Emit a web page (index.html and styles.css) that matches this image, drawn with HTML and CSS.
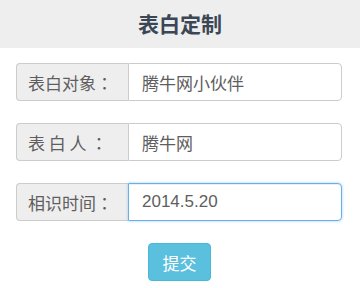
FILE: index.html
```html
<!DOCTYPE html>
<html lang="zh">
<head>
<meta charset="utf-8">
<link rel="stylesheet" href="styles.css">
</head>
<body>
<header class="header"><h1 class="title">表白定制</h1></header>
<form class="form">
  <div class="group">
    <span class="addon">表白对象<span class="colon">：</span></span>
    <div class="field">腾牛网小伙伴</div>
  </div>
  <div class="group">
    <span class="addon">表 白 人 <span class="colon">：</span></span>
    <div class="field">腾牛网</div>
  </div>
  <div class="group">
    <span class="addon">相识时间<span class="colon">：</span></span>
    <div class="field focus">2014.5.20</div>
  </div>
  <div class="actions"><button type="button" class="btn">提交</button></div>
</form>
</body>
</html>
```
FILE: styles.css
```css
* { box-sizing: border-box; }
body {
  margin: 0;
  background: #fff;
  font-family: "Liberation Sans", "Noto Sans CJK SC", sans-serif;
  color: #555;
}
.header {
  height: 48px;
  background: #eee;
  display: flex;
  align-items: center;
  justify-content: center;
}
.title {
  margin: 0;
  font-size: 21px;
  font-weight: bold;
  color: #3b4754;
  line-height: 1;
}
.form {
  padding: 15px 18px 0 16px;
  display: flex;
  flex-direction: column;
  gap: 22px;
}
.group {
  display: flex;
  height: 38px;
}
.addon {
  width: 112px;
  flex: none;
  background: #eee;
  border: 1px solid #ccc;
  border-right: none;
  border-radius: 4px 0 0 4px;
  padding: 0 11px;
  display: flex;
  align-items: center;
  font-family: "Noto Sans CJK SC", sans-serif;
  font-size: 17px;
  color: #5e5e5e;
  white-space: pre;
}
.colon {
  font-family: "Noto Sans CJK TC", "Noto Sans CJK SC", sans-serif;
}
.field {
  flex: 1;
  border: 1px solid #ccc;
  border-radius: 0 4px 4px 0;
  padding: 0 13px;
  display: flex;
  align-items: center;
  font-size: 17px;
  color: #5e5e5e;
}
.field.focus {
  border-color: #66afe9;
  box-shadow: inset 0 1px 1px rgba(0,0,0,.075), 0 0 3px rgba(102,175,233,.6);
}
.actions {
  display: flex;
  justify-content: center;
}
.btn {
  width: 63px;
  height: 38px;
  margin-left: 1px;
  border: 1px solid #46b8da;
  border-radius: 4px;
  background: #5bc0de;
  color: #fff;
  font-size: 17px;
  font-family: "Noto Sans CJK SC", sans-serif;
  padding: 0;
}
```
